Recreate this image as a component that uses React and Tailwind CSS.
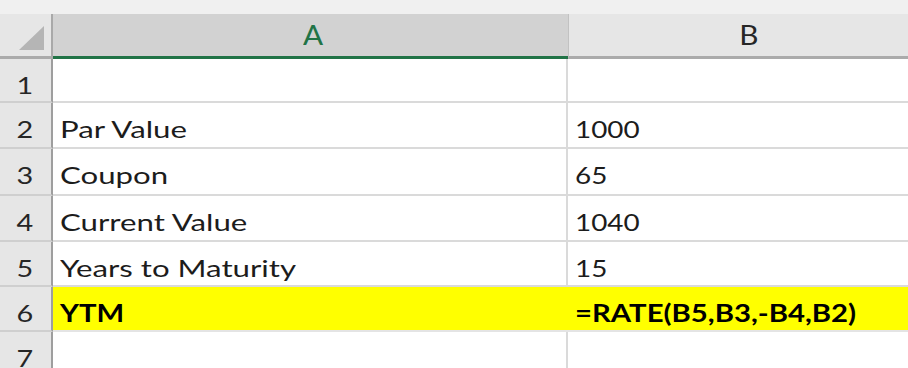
import React from "react";

const rows = [
  { n: "1", a: "", b: "", h: "h-[44px]" },
  { n: "2", a: "Par Value", b: "1000", h: "h-[46px]" },
  { n: "3", a: "Coupon", b: "65", h: "h-[47px]" },
  { n: "4", a: "Current Value", b: "1040", h: "h-[46px]" },
  { n: "5", a: "Years to Maturity", b: "15", h: "h-[45px]" },
  { n: "6", a: "YTM", b: "=RATE(B5,B3,-B4,B2)", h: "h-[45px]", hl: true },
  { n: "7", a: "", b: "", h: "h-[46px]" },
];

export default function App() {
  return (
    <div className="w-[908px] h-[368px] overflow-hidden bg-white font-['Lato',sans-serif] text-[#1c1c1c]">
      <div className="h-[14px] bg-[#f0f0f0]" />
      <div className="grid grid-cols-[53px_515px_340px] h-[45px]">
        <div className="relative bg-[#e6e6e6] border-r-2 border-[#a9a9a9] border-b-[3px] border-b-[#ababab]">
          <div className="absolute left-[19px] top-[12px] w-0 h-0 border-l-[25px] border-l-transparent border-b-[24px] border-b-[#b5b5b5]" />
        </div>
        <div className="bg-[#d2d2d2] border-b-[3px] border-[#217346] flex justify-center pt-[7px] pl-[6px]">
          <span className="inline-block scale-x-[1.1] text-[27px] leading-none text-[#217346]">A</span>
        </div>
        <div className="bg-[#e6e6e6] border-l border-[#c2c2c2] border-b-[3px] border-b-[#ababab] flex justify-center pt-[7px] pl-[20px]">
          <span className="inline-block scale-x-[1.1] text-[27px] leading-none text-[#262626]">B</span>
        </div>
      </div>
      {rows.map((r) => (
        <div key={r.n} className={`grid grid-cols-[53px_515px_340px] ${r.h}`}>
          <div className="bg-[#e6e6e6] border-r-2 border-r-[#9e9e9e] border-b-2 border-b-[#cfcfcf] flex justify-center pt-[14px] pr-[2px]">
            <span className="inline-block scale-x-[1.2] text-[24px] leading-none text-[#262626]">{r.n}</span>
          </div>
          <div
            className={
              r.hl
                ? "bg-[#ffff00] border-b-2 border-b-[#e4e4e4] pl-[7px] pt-[14px]"
                : "border-r-2 border-r-[#dadada] border-b-2 border-b-[#dadada] pl-[7px] pt-[14px]"
            }
          >
            <span
              className={
                r.hl
                  ? "inline-block origin-left scale-x-[1.22] text-[24px] leading-none whitespace-nowrap font-bold text-black"
                  : "inline-block origin-left scale-x-[1.3] text-[24px] leading-none whitespace-nowrap"
              }
            >
              {r.a}
            </span>
          </div>
          <div
            className={
              r.hl
                ? "bg-[#ffff00] border-b-2 border-b-[#e4e4e4] pl-[7px] pt-[14px]"
                : "border-b-2 border-b-[#dadada] pl-[7px] pt-[14px]"
            }
          >
            <span
              className={
                r.hl
                  ? "inline-block origin-left scale-x-[1.22] text-[24px] leading-none whitespace-nowrap font-bold text-black"
                  : "inline-block origin-left scale-x-[1.16] text-[24px] leading-none whitespace-nowrap"
              }
            >
              {r.b}
            </span>
          </div>
        </div>
      ))}
    </div>
  );
}
